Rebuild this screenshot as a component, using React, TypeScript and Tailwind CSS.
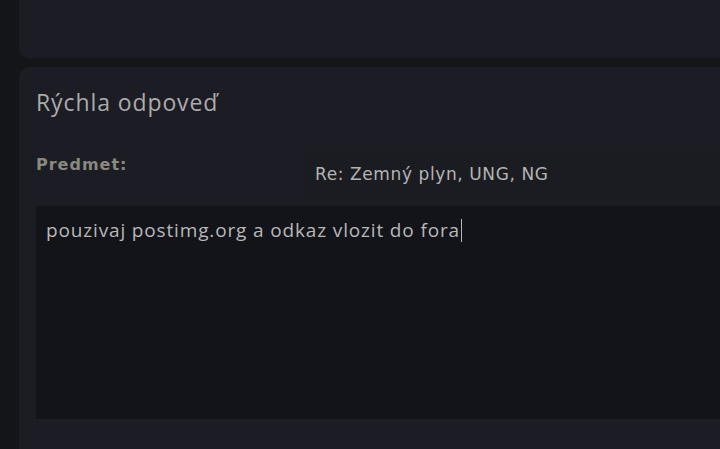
import React, { useState } from 'react';

export default function App() {
  const [subject] = useState('Re: Zemný plyn, UNG, NG');
  const [message] = useState('pouzivaj postimg.org a odkaz vlozit do fora');

  return (
    <div className="h-[449px] w-[720px] overflow-hidden bg-[#141519] pl-[19px]">
      {/* Previous post panel */}
      <div className="h-[58px] rounded-bl-[10px] bg-[#1c1c24]" />

      {/* Quick reply panel */}
      <div className="mt-[9px] h-[400px] rounded-tl-[10px] bg-[#1c1c24] pl-[17px] pt-[19px]">
        <h2 className="text-[23px] leading-[32px] tracking-[0.9px] text-[#ababab] [font-family:'Open_Sans',sans-serif]">
          Rýchla odpoveď
        </h2>

        <div className="mt-[32px] flex">
          <label className="w-[269px] pt-[3px] text-[16px] font-bold tracking-[1px] text-[#8a897f] [font-family:'DejaVu_Sans',sans-serif]">
            Predmet:
          </label>
          <div className="flex h-[50px] flex-1 items-center bg-[#1b1c21] pl-[10px] text-[17px] tracking-[0.6px] text-[#b4b4b4] [font-family:'DejaVu_Sans',sans-serif]">
            {subject}
          </div>
        </div>

        <div className="mt-[6px] h-[213px] bg-[#131419] px-[10px] pt-[8px] text-[19px] tracking-[0.85px] text-[#b8b8b8] [font-family:'Open_Sans',sans-serif]">
          <span>{message}</span>
          <span className="ml-px inline-block h-[23px] w-px translate-y-[5px] bg-[#b8b8b8]" />
        </div>
      </div>
    </div>
  );
}
